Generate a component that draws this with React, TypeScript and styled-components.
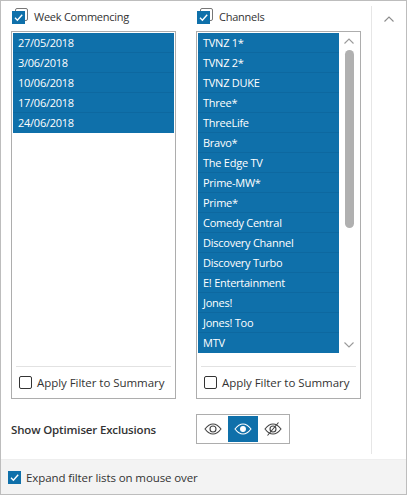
import { createGlobalStyle, styled } from "styled-components";

const BLUE = "#0f70aa";
const weeks = ["27/05/2018", "3/06/2018", "10/06/2018", "17/06/2018", "24/06/2018"];
const channels = [
  "TVNZ 1*",
  "TVNZ 2*",
  "TVNZ DUKE",
  "Three*",
  "ThreeLife",
  "Bravo*",
  "The Edge TV",
  "Prime-MW*",
  "Prime*",
  "Comedy Central",
  "Discovery Channel",
  "Discovery Turbo",
  "E! Entertainment",
  "Jones!",
  "Jones! Too",
  "MTV",
];

const GlobalStyle = createGlobalStyle`
  html, body {
    margin: 0;
    padding: 0;
    background: #fff;
  }
  body {
    font-family: "Open Sans", "Noto Sans", sans-serif;
    font-size: 11px;
    color: #333;
  }
`;

const Window = styled.div`
  width: 407px;
  height: 495px;
  box-sizing: border-box;
  border: 1px solid #bdbdbd;
  display: flex;
  flex-direction: column;
  background: #fff;
`;

const Main = styled.div`
  flex: 1;
  display: flex;
  min-height: 0;
`;

const Content = styled.div`
  width: 370px;
  box-sizing: border-box;
  padding: 7px 0 0 10px;
  display: flex;
  flex-direction: column;
`;

const Columns = styled.div`
  display: flex;
  column-gap: 20px;
`;

const Column = styled.div<{ $width: number }>`
  width: ${(p) => p.$width}px;
  display: flex;
  flex-direction: column;
`;

const ColumnHeader = styled.div`
  height: 23px;
  box-sizing: border-box;
  display: flex;
  align-items: center;
  padding: 0 0 6px 23px;
  position: relative;
  font-size: 11px;
  letter-spacing: -0.25px;
`;

const StackedCheck = styled.span`
  position: absolute;
  left: 1px;
  top: 0;
  width: 17px;
  height: 17px;
`;

const FilterBox = styled.div`
  height: 368px;
  box-sizing: border-box;
  border: 1px solid #adadad;
  padding: 1px;
  display: flex;
  flex-direction: column;
`;

const ListArea = styled.div`
  flex: 1;
  display: flex;
  align-items: flex-start;
  min-height: 0;
`;

const List = styled.div`
  flex: 1;
`;

const ListRow = styled.div`
  height: 20px;
  box-sizing: border-box;
  padding-left: 5px;
  background: ${BLUE};
  border-bottom: 1px solid #0d68a0;
  color: #fff;
  font-size: 11px;
  letter-spacing: -0.25px;
  line-height: 19px;
  &:last-child {
    border-bottom: 0;
  }
`;

const Scrollbar = styled.div`
  width: 20px;
  height: 320px;
  display: flex;
  flex-direction: column;
  align-items: center;
`;

const ScrollButton = styled.div`
  height: 16px;
  display: flex;
  align-items: center;
  justify-content: center;
`;

const ScrollThumb = styled.div`
  width: 9px;
  height: 178px;
  margin-top: 1px;
  border-radius: 4.5px;
  background: #b0b0b0;
`;

const ScrollSpacer = styled.div`
  flex: 1;
`;

const ApplyRow = styled.div`
  margin: 0 3px;
  border-top: 1px solid #e2e2e2;
  height: 30px;
  display: flex;
  align-items: center;
  column-gap: 5px;
  padding-left: 3px;
  font-size: 11.5px;
  letter-spacing: -0.05px;
`;

const EmptyCheck = styled.span`
  width: 13px;
  height: 13px;
  box-sizing: border-box;
  border: 1px solid #333;
  border-radius: 2px;
  flex: none;
`;

const ExclusionRow = styled.div`
  margin-top: 15px;
  display: flex;
  align-items: center;
`;

const ExclusionLabel = styled.div`
  width: 185px;
  font-weight: 600;
  font-size: 11.5px;
  letter-spacing: -0.16px;
`;

const ToggleGroup = styled.div`
  width: 94px;
  height: 30px;
  box-sizing: border-box;
  border: 1px solid #adadad;
  padding: 1px;
  display: flex;
`;

const ToggleButton = styled.div<{ $active?: boolean }>`
  width: 30px;
  height: 26px;
  display: flex;
  align-items: center;
  justify-content: center;
  background: ${(p) => (p.$active ? BLUE : "transparent")};
  color: ${(p) => (p.$active ? "#fff" : "#444")};
`;

const SidePanel = styled.div`
  width: 35px;
  height: 448px;
  margin-top: 5px;
  border-left: 1px solid #e6e6e6;
  display: flex;
  justify-content: center;
  padding-top: 10px;
  box-sizing: border-box;
`;

const Footer = styled.div`
  height: 35px;
  box-sizing: border-box;
  background: #f3f3f3;
  border-top: 1px solid #eeeeee;
  display: flex;
  align-items: center;
  column-gap: 5px;
  padding-left: 7px;
  font-size: 11.5px;
  letter-spacing: -0.1px;
`;

const Check = () => (
  <svg width="13" height="13" viewBox="0 0 13 13">
    <rect width="13" height="13" fill={BLUE} />
    <path d="M3 6.8 L5.4 9.2 L10.2 3.8" fill="none" stroke="#fff" strokeWidth="1.4" />
  </svg>
);

const HeaderCheck = () => (
  <StackedCheck>
    <svg width="17" height="17" viewBox="0 0 17 17">
      <rect x="3.5" y="0.5" width="12" height="12" rx="1.5" fill="#fff" stroke="#777" />
      <rect x="0" y="3" width="13" height="13" fill={BLUE} />
      <path d="M3 9.8 L5.4 12.2 L10.2 6.8" fill="none" stroke="#fff" strokeWidth="1.4" />
    </svg>
  </StackedCheck>
);

const Chevron = ({ up, color, size }: { up: boolean; color: string; size: number }) => (
  <svg width={size} height={size / 2 + 1} viewBox="0 0 10 6">
    <path
      d={up ? "M0.5 5.5 L5 1 L9.5 5.5" : "M0.5 0.5 L5 5 L9.5 0.5"}
      fill="none"
      stroke={color}
      strokeWidth="1.1"
    />
  </svg>
);

const Eye = ({ filled, slashed }: { filled?: boolean; slashed?: boolean }) => (
  <svg width="18" height="14" viewBox="0 0 18 14" fill="none" stroke="currentColor" strokeWidth="1.1">
    <path d="M1 7 C4 3 6.5 2 9 2 C11.5 2 14 3 17 7 C14 11 11.5 12 9 12 C6.5 12 4 11 1 7 Z" />
    <circle cx="9" cy="7" r={filled ? 2.4 : 3} fill={filled ? "currentColor" : "none"} />
    {slashed && <path d="M14.5 0.5 L3.5 13.5" />}
  </svg>
);

export default function App() {
  return (
    <>
      <GlobalStyle />
      <Window>
        <Main>
          <Content>
            <Columns>
              <Column $width={165}>
                <ColumnHeader>
                  <HeaderCheck />
                  Week Commencing
                </ColumnHeader>
                <FilterBox>
                  <ListArea>
                    <List>
                      {weeks.map((w) => (
                        <ListRow key={w}>{w}</ListRow>
                      ))}
                    </List>
                  </ListArea>
                  <ApplyRow>
                    <EmptyCheck />
                    Apply Filter to Summary
                  </ApplyRow>
                </FilterBox>
              </Column>
              <Column $width={165}>
                <ColumnHeader>
                  <HeaderCheck />
                  Channels
                </ColumnHeader>
                <FilterBox>
                  <ListArea>
                    <List>
                      {channels.map((c) => (
                        <ListRow key={c}>{c}</ListRow>
                      ))}
                    </List>
                    <Scrollbar>
                      <ScrollButton>
                        <Chevron up color="#9a9a9a" size={10} />
                      </ScrollButton>
                      <ScrollThumb />
                      <ScrollSpacer />
                      <ScrollButton>
                        <Chevron up={false} color="#9a9a9a" size={10} />
                      </ScrollButton>
                    </Scrollbar>
                  </ListArea>
                  <ApplyRow>
                    <EmptyCheck />
                    Apply Filter to Summary
                  </ApplyRow>
                </FilterBox>
              </Column>
            </Columns>
            <ExclusionRow>
              <ExclusionLabel>Show Optimiser Exclusions</ExclusionLabel>
              <ToggleGroup>
                <ToggleButton>
                  <Eye />
                </ToggleButton>
                <ToggleButton $active>
                  <Eye filled />
                </ToggleButton>
                <ToggleButton>
                  <Eye slashed />
                </ToggleButton>
              </ToggleGroup>
            </ExclusionRow>
          </Content>
          <SidePanel>
            <Chevron up color="#8c8c8c" size={10} />
          </SidePanel>
        </Main>
        <Footer>
          <Check />
          Expand filter lists on mouse over
        </Footer>
      </Window>
    </>
  );
}
